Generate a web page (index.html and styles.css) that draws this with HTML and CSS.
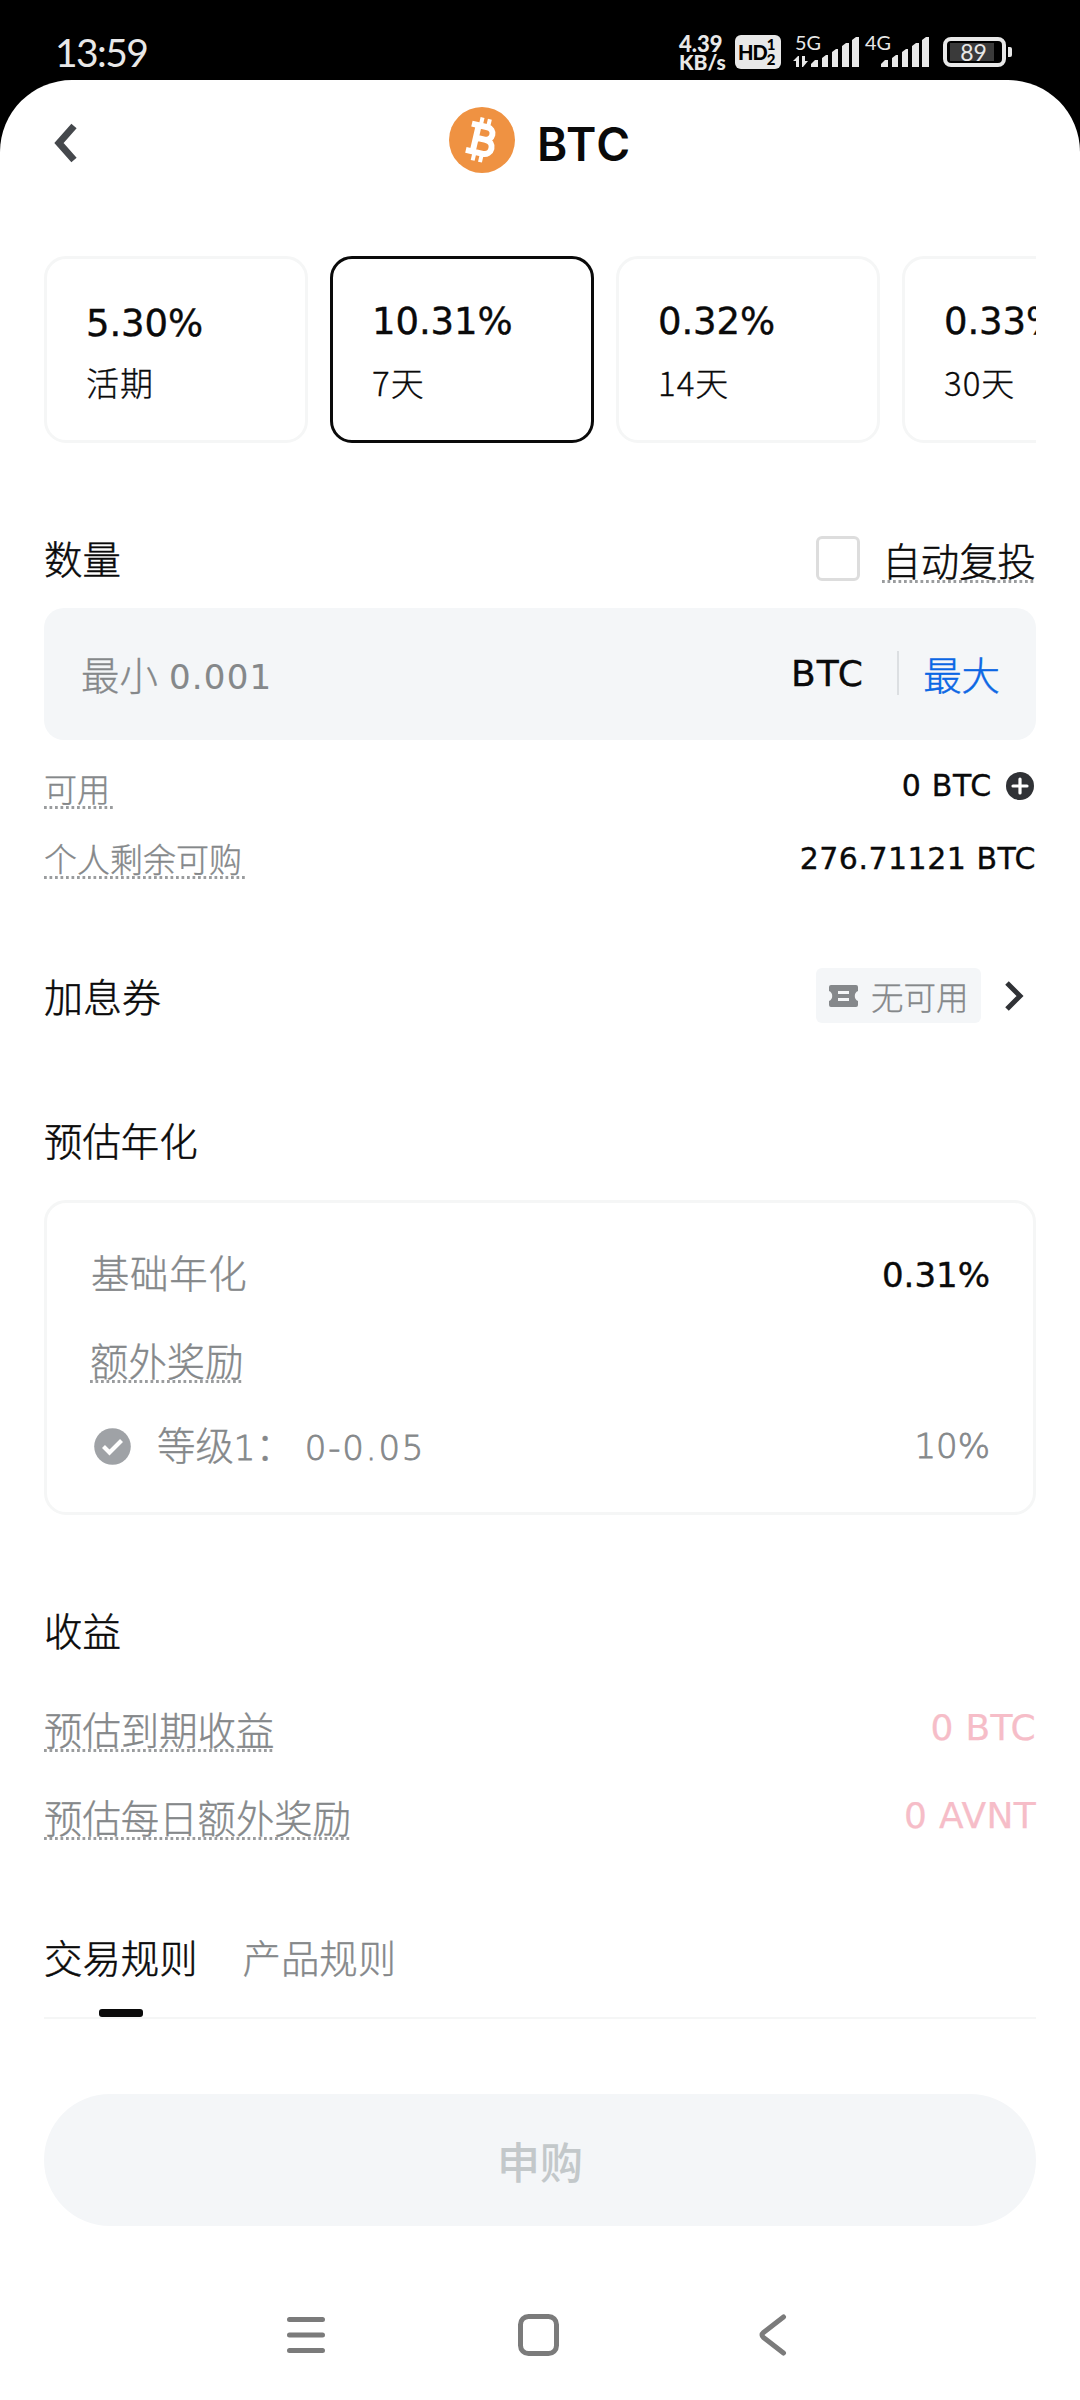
FILE: index.html
```html
<!DOCTYPE html>
<html lang="zh-CN">
<head>
<meta charset="utf-8">
<title>BTC</title>
<link rel="stylesheet" href="styles.css">
</head>
<body>
<div class="status">
  <div class="clock">13:59</div>
  <div class="speed"><span>4.39</span><span>KB/s</span></div>
  <div class="hd"><b>HD</b><span class="sims"><span>1</span><span>2</span></span></div>
  <svg class="signal first" width="67" height="34" viewBox="0 0 67 34">
    <text x="2" y="15" class="net" textLength="26" lengthAdjust="spacingAndGlyphs">5G</text>
    <path class="arrows" d="M0 26l5-5h1v11h-3v-6zM15 26l-5 6h-1V21h3v5z"/>
    <path class="bars" d="M18 32v-3l4-4h3v7zM29 32V23l4-3h2v12zM39 32V17l4-3h2v18zM49 32V11l4-3h3v24zM59 32V5l4-3h3v30z"/>
  </svg>
  <svg class="signal" width="65" height="34" viewBox="0 0 65 34">
    <text x="0" y="15" class="net" textLength="26" lengthAdjust="spacingAndGlyphs">4G</text>
    <path class="bars" d="M16 32v-3l4-4h3v7zM27 32V23l4-3h2v12zM37 32V17l4-3h2v18zM47 32V11l4-3h3v24zM57 32V5l4-3h3v30z"/>
  </svg>
  <div class="battery"><span>89</span></div>
  <div class="battery-tip"></div>
</div>
<main class="sheet">
  <header class="header">
    <svg class="back" width="30" height="44" viewBox="0 0 30 44"><path d="M24 5L9 22l15 17"/></svg>
    <div class="coin-title">
      <svg class="coin" width="66" height="66" viewBox="0 0 66 66">
        <circle cx="33" cy="33" r="33" fill="#ef9242"/>
        <g transform="rotate(13 33 33)" fill="none" stroke="#fff">
          <path stroke-width="6" d="M19.500 19.300H35.500a6.300 6.300 0 0 1 0 12.800H27M35.500 32.100H37a7 7 0 0 1 0 14.200H19.500M26.500 19V46.500"/>
          <path stroke-width="4" d="M28.500 11v8M36 11v8M28.500 46v9M36 46v9"/>
        </g>
      </svg>
      <h1>BTC</h1>
    </div>
  </header>
  <div class="terms">
    <div class="term"><strong class="low">5.30%</strong><span>活期</span></div>
    <div class="term selected"><strong>10.31%</strong><span>7天</span></div>
    <div class="term"><strong>0.32%</strong><span>14天</span></div>
    <div class="term"><strong>0.33%</strong><span>30天</span></div>
  </div>
  <div class="row amount-head">
    <h2>数量</h2>
    <div class="auto"><i class="checkbox"></i><span class="dotted dark">自动复投</span></div>
  </div>
  <div class="input">
    <span class="placeholder">最小 <em>0.001</em></span>
    <span class="unit">BTC</span>
    <i class="divider"></i>
    <a class="max">最大</a>
  </div>
  <div class="row available">
    <span class="dotted small wide">可用</span>
    <div class="balance"><span>0 BTC</span>
      <svg width="28" height="28" viewBox="0 0 28 28"><circle cx="14" cy="14" r="14" fill="#303236"/><path d="M14 7v14M7 14h14" stroke="#fff" stroke-width="3.200" stroke-linecap="round"/></svg>
    </div>
  </div>
  <div class="row quota">
    <span class="dotted small wide">个人剩余可购</span>
    <span class="value">276.71121 BTC</span>
  </div>
  <div class="row coupon">
    <h2>加息券</h2>
    <div class="coupon-link">
      <span class="chip">
        <svg width="29" height="22" viewBox="0 0 29 22"><path fill="#85888b" fill-rule="evenodd" d="M2 0h25a2 2 0 0 1 2 2v4a5.500 5.500 0 0 0 0 10v4a2 2 0 0 1-2 2H2a2 2 0 0 1-2-2v-4A5.500 5.500 0 0 0 0 6V2a2 2 0 0 1 2-2zM9 6v3h11V6zM9 13v3h11v-3z"/></svg>
        <span class="chip-text">无可用</span>
      </span>
      <svg class="more" width="20" height="30" viewBox="0 0 20 30"><path d="M3 2l13 13L3 28"/></svg>
    </div>
  </div>
  <h2 class="apr-title">预估年化</h2>
  <section class="apr">
    <div class="row apr-row"><span class="base">基础年化</span><span class="rate">0.31%</span></div>
    <div class="row"><span class="dotted">额外奖励</span></div>
    <div class="row apr-row muted">
      <span class="level">
        <svg width="37" height="37" viewBox="0 0 37 37"><circle cx="18.500" cy="18.500" r="18.300" fill="#9fa2a6"/><path d="M9.500 18.500l6 6 12-12" fill="none" stroke="#fff" stroke-width="4.200"/></svg>
        <span>等级<em>1</em>：</span><em class="range">0-0.05</em>
      </span>
      <span class="bonus">10%</span>
    </div>
  </section>
  <h2 class="earn-title">收益</h2>
  <div class="row earn"><span class="dotted">预估到期收益</span><span class="pink">0 BTC</span></div>
  <div class="row earn"><span class="dotted">预估每日额外奖励</span><span class="pink">0 AVNT</span></div>
  <nav class="tabs">
    <a class="tab active">交易规则</a>
    <a class="tab">产品规则</a>
  </nav>
  <button class="submit">申购</button>
</main>
<footer class="nav">
  <svg width="44" height="46" viewBox="0 0 44 46"><path d="M5.500 7.500h33M5.500 23h33M5.500 38.500h33"/></svg>
  <svg width="44" height="46" viewBox="0 0 44 46"><rect x="3.500" y="4.500" width="36" height="37" rx="8"/></svg>
  <svg width="44" height="46" viewBox="0 0 44 46"><path d="M34.500 5L14.500 20.500q-3 2.500 0 5L34.500 41"/></svg>
</footer>
</body>
</html>
```

FILE: styles.css
```css
* { box-sizing: border-box; }
body {
  margin: 0;
  width: 1080px;
  height: 2400px;
  background: #000;
  display: flex;
  flex-direction: column;
  font-family: "DejaVu Sans", "Noto Sans CJK SC", sans-serif;
  color: #0a0a0a;
  overflow: hidden;
}
h1, h2 { margin: 0; font-weight: 300; }
em, i { font-style: normal; }

/* status bar */
.status {
  height: 80px;
  display: flex;
  align-items: flex-start;
  padding: 35px 0 0 55px;
  color: #e8e8e8;
  font-family: Lato, sans-serif;
}
.clock { width: 624px; font-size: 39px; line-height: 34px; letter-spacing: -1.6px; }
.speed {
  width: 56px;
  display: flex;
  flex-direction: column;
  font-size: 22px;
  font-weight: 900;
  line-height: 18px;
}
.speed span:last-child { font-size: 21px; }
.hd {
  width: 46px;
  height: 34px;
  border-radius: 6px;
  background: #e8e8e8;
  color: #000;
  display: flex;
  align-items: center;
  padding-left: 3px;
  font-size: 20px;
}
.hd b { font-weight: 900; letter-spacing: -1px; }
.sims { display: flex; flex-direction: column; font-size: 15px; line-height: 15px; font-weight: 900; }
.signal { margin-right: 5px; overflow: visible; }
.signal.first { margin-left: 12px; }
.net { font-size: 20px; fill: #e8e8e8; }
.bars, .arrows { fill: #e8e8e8; }
.battery {
  margin: 2px 0 0 8px;
  width: 63px;
  height: 30px;
  border: 4px solid #e8e8e8;
  border-radius: 8px;
  padding: 2px 8px 2px 3px;
}
.battery span {
  display: block;
  background: #3a3a3a;
  font-size: 23px;
  line-height: 18px;
  text-align: center;
  padding-left: 3px;
}
.battery-tip { width: 4px; height: 10px; margin: 12px 0 0 2px; border-radius: 0 2px 2px 0; background: #e8e8e8; }

/* page */
.sheet {
  height: 2190px;
  background: #fff;
  border-radius: 72px 72px 0 0;
  padding: 0 44px;
  display: flex;
  flex-direction: column;
}
.header { height: 120px; display: flex; align-items: center; }
.back { margin: 6px 0 0 6px; fill: none; stroke: #45484c; stroke-width: 7; }
.coin-title { display: flex; align-items: center; gap: 22px; margin-left: 369px; }
h1 { font: 600 46px/60px Inter, sans-serif; letter-spacing: 1.3px; padding-top: 7px; }

.terms { display: flex; gap: 22px; margin-top: 56px; overflow: hidden; }
.term {
  flex: 0 0 264px;
  height: 187px;
  border: 3px solid #f5f6f6;
  border-radius: 22px;
  padding: 41px 0 0 39px;
  display: flex;
  flex-direction: column;
}
.term.selected { border-color: #0a0a0a; }
.term strong { font-size: 37px; line-height: 44px; font-weight: 400; -webkit-text-stroke: .4px; letter-spacing: -.1px; }
.term strong.low { position: relative; top: 2px; }
.term span {
  font-size: 33px;
  font-weight: 300;
  line-height: 44px;
  margin-top: 16px;
  letter-spacing: 1px;
  -webkit-text-stroke: .3px;
  font-family: "Noto Sans CJK SC", sans-serif;
}

.row { display: flex; justify-content: space-between; align-items: flex-start; }
h2 { font-size: 38.4px; line-height: 52px; height: 50px; -webkit-text-stroke: .5px; }

.amount-head { margin-top: 92px; height: 73px; }
.auto { display: flex; gap: 22px; }
.auto .dotted { margin-top: 2px; }
.checkbox { width: 44px; height: 45px; margin-top: 1px; border: 3px solid #ddd; border-radius: 6px; }
.dotted {
  height: 46px;
  font-size: 38.4px;
  line-height: 51px;
  font-weight: 300;
  color: #85888a;
  -webkit-text-stroke: .35px;
  background: linear-gradient(90deg, #9a9c9e 50%, transparent 50%) 0 100% / 5.5px 3px repeat-x;
}
.dotted.dark { color: #0a0a0a; -webkit-text-stroke: .5px; }
.dotted.small { height: 40px; font-size: 33px; line-height: 44px; }
.dotted.wide { padding-right: 3px; }

.input {
  height: 132px;
  border-radius: 20px;
  background: #f4f6f8;
  display: flex;
  align-items: center;
  padding: 0 36px 2px 37px;
  font-size: 38.4px;
  font-weight: 300;
}
.placeholder { flex: 1; color: #85888a; -webkit-text-stroke: .35px; }
.placeholder em { font-size: 34px; font-weight: 400; -webkit-text-stroke: .1px; letter-spacing: 1.2px; margin-left: -1px; position: relative; top: -1px; }
.unit { font-size: 36px; font-weight: 400; letter-spacing: 1.2px; -webkit-text-stroke: .35px; }
.divider { width: 2px; height: 44px; margin: 0 24px 0 33px; background: #dcdfe2; }
.max { color: #0b66e4; -webkit-text-stroke: .5px; }

.available { margin-top: 29px; height: 40px; }
.balance { display: flex; align-items: center; gap: 14px; padding-right: 2px; font-size: 30px; line-height: 34px; letter-spacing: .7px; -webkit-text-stroke: .35px; }
.quota { margin-top: 30px; height: 40px; }
.value { font-size: 30px; line-height: 40px; letter-spacing: .5px; -webkit-text-stroke: .35px; }

.coupon { margin-top: 89px; height: 55px; }
.coupon h2 { line-height: 61px; font-size: 39px; }
.coupon-link { display: flex; align-items: center; }
.chip {
  width: 165px;
  height: 55px;
  border-radius: 6px;
  background: #f4f6f8;
  display: flex;
  align-items: center;
  gap: 13px;
  padding-left: 13px;
  font-size: 32.5px;
  font-weight: 300;
  color: #85888a;
}
.chip-text { line-height: 50px; padding-top: 6px; -webkit-text-stroke: .3px; }
.more { margin: 0 12px 0 23px; fill: none; stroke: #303236; stroke-width: 5; }

.apr-title { margin-top: 94px; }
.apr {
  margin-top: 33px;
  height: 315px;
  border: 3px solid #f5f6f6;
  border-radius: 22px;
  padding: 45px 43px 0 43px;
  display: flex;
  flex-direction: column;
  gap: 37px;
}
.apr-row { height: 52px; line-height: 53px; font-size: 38.4px; font-weight: 300; -webkit-text-stroke: .35px; }
.base { color: #85888a; letter-spacing: .7px; margin-left: 1px; }
.rate { font-size: 34px; line-height: 54px; font-weight: 400; -webkit-text-stroke: .4px; }
.muted { color: #85888a; }
.level { display: flex; align-items: center; padding-left: 4px; }
.level svg { margin: 0 26px 3px 0; }
.level em { font-size: 34px; -webkit-text-stroke: .8px; }
.level .range { margin-left: 11px; letter-spacing: 1.8px; line-height: 54px; }
.bonus { font-size: 34px; -webkit-text-stroke: .8px; }

.earn-title { margin-top: 92px; margin-bottom: 49px; }
.earn { height: 46px; margin-bottom: 42px; }
.pink { font-size: 36px; line-height: 43px; color: #f6bdc8; letter-spacing: .3px; -webkit-text-stroke: .25px; }

.tabs { display: flex; gap: 45px; margin-top: 52px; height: 85px; border-bottom: 2px solid #f5f6f6; }
.tab { font-size: 38.4px; font-weight: 300; line-height: 52px; color: #85888a; -webkit-text-stroke: .35px; }
.tab.active { color: #0a0a0a; display: flex; flex-direction: column; align-items: center; -webkit-text-stroke: .5px; }
.tab.active::after { content: ""; width: 44px; height: 8px; margin-top: 23px; border-radius: 3px; background: #0a0a0a; }

.submit {
  margin-top: 75px;
  height: 132px;
  border: 0;
  border-radius: 66px;
  background: #f4f6f8;
  color: #c3c8ca;
  font: 500 43px/60px "Noto Sans CJK SC", sans-serif;
  flex: none;
}

.nav {
  height: 130px;
  background: #fff;
  display: flex;
  justify-content: space-between;
  padding: 42px 287px 0 284px;
  fill: none;
  stroke: #7b7b7b;
  stroke-width: 5;
  stroke-linecap: round;
}
```
